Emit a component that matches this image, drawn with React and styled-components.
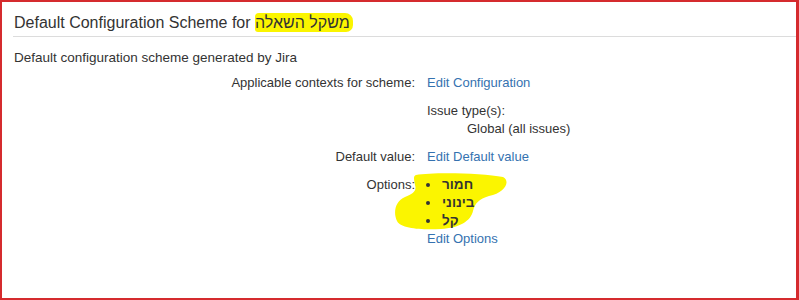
import React from "react";
import styled, { createGlobalStyle } from "styled-components";

const GlobalStyle = createGlobalStyle`
  html, body {
    margin: 0;
    padding: 0;
    background: #fff;
  }
  body {
    font-family: "Liberation Sans", Arial, sans-serif;
    color: #333;
  }
`;

const Frame = styled.div`
  position: relative;
  box-sizing: border-box;
  width: 799px;
  height: 300px;
  border: 2px solid #d52b2e;
  border-right-width: 3px;
  overflow: hidden;
  background: #fff;
`;

const Header = styled.h2`
  margin: 0 0 0 11px;
  padding: 11px 0 4px 1px;
  font-size: 16px;
  font-weight: 400;
  line-height: 19px;
  color: #333;
  border-bottom: 1px solid #dcdcdc;
`;

const Marker = styled.span`
  background: #fbf500;
  border-radius: 4px 8px 7px 3px;
  padding: 1px 3px 1px 0;
`;

const Description = styled.p`
  margin: 12px 0 0 12px;
  font-size: 13.5px;
  line-height: 18px;
`;

const Details = styled.dl`
  display: grid;
  grid-template-columns: 401px auto;
  column-gap: 12px;
  row-gap: 10px;
  margin: 7px 0 0 12px;
  font-size: 13px;
  line-height: 18px;
`;

const Label = styled.dt`
  position: relative;
  z-index: 1;
  text-align: right;
  margin: 0;
`;

const Value = styled.dd`
  margin: 0;
  position: relative;
`;

const Link = styled.a`
  position: relative;
  z-index: 1;
  color: #3572b0;
  text-decoration: none;
  cursor: pointer;
`;

const Indented = styled.div`
  padding-left: 40px;
`;

const OptionList = styled.ul`
  position: relative;
  z-index: 1;
  margin: 0;
  padding: 0 0 0 14px;
  list-style: disc;
  font-weight: 700;
  font-size: 13.5px;
  line-height: 18px;
`;

const Option = styled.li`
  padding-left: 1px;
`;

// yellow marker scribble painted over the screenshot
const Scribble = styled.svg`
  position: absolute;
  z-index: 0;
  left: -34px;
  top: -5px;
  width: 118px;
  height: 60px;
  pointer-events: none;
`;

export default function App() {
  return (
    <>
      <GlobalStyle />
      <Frame>
        <Header>
          Default Configuration Scheme for <Marker>משקל השאלה</Marker>
        </Header>
        <Description>Default configuration scheme generated by Jira</Description>
        <Details>
          <Label>Applicable contexts for scheme:</Label>
          <Value>
            <Link>Edit Configuration</Link>
          </Value>

          <Label />
          <Value>
            Issue type(s):
            <Indented>Global (all issues)</Indented>
          </Value>

          <Label>Default value:</Label>
          <Value>
            <Link>Edit Default value</Link>
          </Value>

          <Label>Options:</Label>
          <Value>
            <Scribble viewBox="0 0 118 60">
              <path
                d="M23 4 C 40 1, 90 2, 110 6 C 118 10, 112 22, 96 25 C 86 28, 82 32, 80 40 C 78 50, 66 57, 48 58 C 30 59, 8 58, 4 50 C 0 42, 2 30, 12 26 C 20 23, 24 20, 22 14 C 21 8, 20 5, 23 4 Z"
                fill="#fbf500"
              />
            </Scribble>
            <OptionList>
              <Option>חמור</Option>
              <Option>בינוני</Option>
              <Option>קל</Option>
            </OptionList>
            <Link>Edit Options</Link>
          </Value>
        </Details>
      </Frame>
    </>
  );
}
